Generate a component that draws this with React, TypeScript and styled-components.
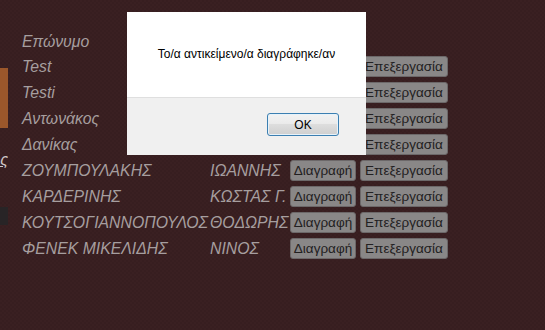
import React from "react";
import styled, { createGlobalStyle } from "styled-components";

type Person = { surname: string; name: string };

const people: Person[] = [
	{ surname: "Test", name: "" },
	{ surname: "Testi", name: "" },
	{ surname: "Αντωνάκος", name: "" },
	{ surname: "Δανίκας", name: "" },
	{ surname: "ΖΟΥΜΠΟΥΛΑΚΗΣ", name: "ΙΩΑΝΝΗΣ" },
	{ surname: "ΚΑΡΔΕΡΙΝΗΣ", name: "ΚΩΣΤΑΣ Γ." },
	{ surname: "ΚΟΥΤΣΟΓΙΑΝΝΟΠΟΥΛΟΣ", name: "ΘΟΔΩΡΗΣ" },
	{ surname: "ΦΕΝΕΚ ΜΙΚΕΛΙΔΗΣ", name: "ΝΙΝΟΣ" },
];

const App = () => {
	return (
		<Page>
			<GlobalStyle />
			<Sidebar>
				<ActiveTab />
				<NavLink>
					<span>Εργαζόμενος</span>
				</NavLink>
				<DarkTab />
			</Sidebar>
			<Content>
				<Table>
					<HeadCell>Επώνυμο</HeadCell>
					<span />
					<span />
					<span />
					{people.map((p, i) => (
						<React.Fragment key={i}>
							<Cell>{p.surname}</Cell>
							<Cell>{p.name}</Cell>
							<ActionButton>Διαγραφή</ActionButton>
							<ActionButton>Επεξεργασία</ActionButton>
						</React.Fragment>
					))}
				</Table>
			</Content>
			<Dialog>
				<DialogBody>Το/α αντικείμενο/α διαγράφηκε/αν</DialogBody>
				<DialogFooter>
					<OkButton>OK</OkButton>
				</DialogFooter>
			</Dialog>
		</Page>
	);
};

export default App;

const GlobalStyle = createGlobalStyle`
	html, body {
		margin: 0;
		padding: 0;
		background: #3a2022;
	}
`;

const Page = styled.div`
	position: relative;
	display: flex;
	width: 545px;
	height: 330px;
	overflow: hidden;
	background-color: #3a2022;
	background-image: repeating-conic-gradient(rgba(0, 0, 0, 0.05) 0 25%, transparent 0 50%);
	background-size: 4px 4px;
	font-family: "Liberation Sans", Arial, sans-serif;
`;

const Sidebar = styled.div`
	display: flex;
	flex-direction: column;
	width: 8px;
	padding-top: 68px;
	overflow: hidden;
	flex-shrink: 0;
`;

const ActiveTab = styled.div`
	height: 60px;
	background: #9b572b;
`;

const NavLink = styled.div`
	display: flex;
	justify-content: flex-end;
	margin-top: 23px;
	height: 18px;
	white-space: nowrap;
	color: #cfc8c8;
	font-style: italic;
	font-size: 16px;
	line-height: 18px;
	text-decoration: underline;
`;

const DarkTab = styled.div`
	margin-top: 38px;
	height: 18px;
	background: #282426;
`;

const Content = styled.div`
	padding: 33px 0 0 14px;
`;

const Table = styled.div`
	display: grid;
	grid-template-columns: 186px 78px 66px 90px;
	grid-template-rows: 18px;
	grid-auto-rows: 21px;
	column-gap: 2px;
	row-gap: 5px;
	align-items: center;

	> :nth-child(4n) {
		margin-left: 2px;
	}
`;

const HeadCell = styled.div`
	color: #a69e9f;
	font-style: italic;
	font-size: 15.8px;
	line-height: 18px;
	white-space: nowrap;
`;

const Cell = styled(HeadCell)``;

const ActionButton = styled.button`
	height: 21px;
	padding: 0;
	border: 1px solid #6c6869;
	border-radius: 3px;
	background: #898787;
	color: #222021;
	font-family: "Liberation Sans", Arial, sans-serif;
	font-size: 13.5px;
	line-height: 19px;
	white-space: nowrap;
`;

const Dialog = styled.div`
	position: absolute;
	left: 127px;
	top: 12px;
	width: 239px;
	height: 143px;
	display: flex;
	flex-direction: column;
	background: #ffffff;
`;

const DialogBody = styled.div`
	height: 85px;
	display: flex;
	align-items: center;
	justify-content: center;
	color: #000;
	font-size: 12px;
	padding-bottom: 2px;
	box-sizing: border-box;
`;

const DialogFooter = styled.div`
	flex: 1;
	display: flex;
	justify-content: flex-end;
	align-items: flex-start;
	padding: 15px 27px 0 0;
	background: #f0f0f0;
	border-top: 1px solid #dfdfdf;
`;

const OkButton = styled.button`
	width: 72px;
	height: 23px;
	padding: 0;
	border: 1px solid #3c7fb1;
	border-radius: 3px;
	box-shadow: inset 0 0 0 1px #e6f2fa;
	background: linear-gradient(#f2f2f2 0%, #ebebeb 45%, #dddddd 50%, #cfcfcf 100%);
	color: #000;
	font-family: "Liberation Sans", Arial, sans-serif;
	font-size: 12px;
`;
